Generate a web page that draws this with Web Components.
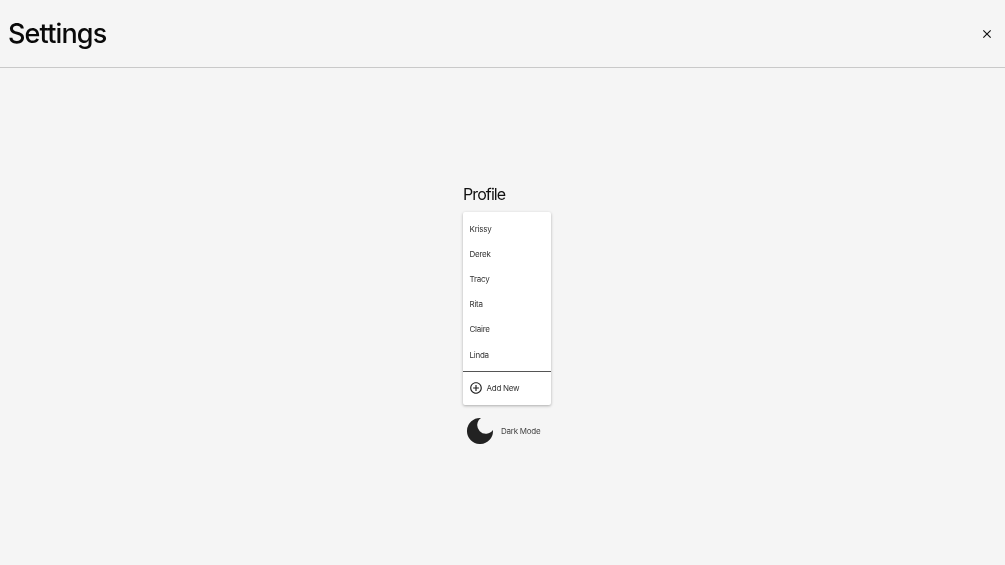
<!DOCTYPE html>
<html><head><meta charset="utf-8"><style>
html,body{margin:0;height:100%;background:#f5f5f5}
body{font-family:Inter,"Liberation Sans",sans-serif;color:#111}
</style></head><body>
<settings-page></settings-page>
<script>
function def(name,html){customElements.define(name,class extends HTMLElement{constructor(){super();this.attachShadow({mode:'open'}).innerHTML=html}})}
def('settings-header',`<style>:host{display:flex;align-items:center;justify-content:space-between;box-sizing:border-box;height:68px;padding:0 11.500px 0 8px;border-bottom:1px solid #c9c9c9}
h1{margin:0;font:500 27px/1 Inter,sans-serif;color:#0a0a0a;letter-spacing:-.85px}svg{display:block}</style>
<h1>Settings</h1><svg width="14" height="14" viewBox="0 0 24 24"><path fill="#111" d="M19 6.41 17.59 5 12 10.59 6.41 5 5 6.41 10.59 12 5 17.59 6.41 19 12 13.41 17.59 19 19 17.59 13.41 12z"/></svg>`);
def('profile-item',`<style>:host{display:flex;align-items:center;height:25.1px;padding-left:6.5px;font:400 8px Inter,sans-serif;letter-spacing:-.25px;color:#333}</style><slot></slot>`);
def('add-new',`<style>:host{display:flex;align-items:center;gap:4px;height:32px;padding-left:5.5px;font:400 8px Inter,sans-serif;letter-spacing:-.25px;color:#333}svg{display:block}</style>
<svg width="14" height="14" viewBox="0 0 24 24"><path fill="#222" d="M13 7h-2v4H7v2h4v4h2v-4h4v-2h-4V7zm-1-5C6.48 2 2 6.48 2 12s4.480 10 10 10 10-4.480 10-10S17.520 2 12 2zm0 18c-4.410 0-8-3.590-8-8s3.590-8 8-8 8 3.590 8 8-3.590 8-8 8z"/></svg><slot></slot>`);
def('profile-card',`<style>:host{display:block;width:88px;height:193px;box-sizing:border-box;background:#fff;border-radius:2px;box-shadow:0 1px 3px rgba(0,0,0,.3)}
.list{height:160px;box-sizing:border-box;padding-top:4.5px;border-bottom:1px solid #555}</style>
<div class="list"><slot></slot></div><add-new>Add New</add-new>`);
def('dark-toggle',`<style>:host{display:flex;align-items:center;gap:8px;height:30px;margin-top:11px;padding-left:4px;font:400 8px Inter,sans-serif;letter-spacing:-.25px;color:#444}svg{display:block}</style>
<svg width="26" height="26" viewBox="0 0 26 26"><path fill="#222" d="M14 .05A13 13 0 1 0 25.950 12 8.600 8.600 0 1 1 14 .05z"/></svg><slot></slot>`);
def('settings-page',`<style>:host{display:block;min-height:100vh;will-change:transform}
main{display:flex;justify-content:center;padding:116px 0 0 9px}
.col{width:88px}
h2{margin:0 0 8px;height:20px;font:400 16px/20px Inter,sans-serif;color:#111;white-space:nowrap;letter-spacing:-.9px}</style>
<settings-header></settings-header>
<main><div class="col"><h2>Profile</h2>
<profile-card><profile-item>Krissy</profile-item><profile-item>Derek</profile-item><profile-item>Tracy</profile-item><profile-item>Rita</profile-item><profile-item>Claire</profile-item><profile-item>Linda</profile-item></profile-card>
<dark-toggle>Dark Mode</dark-toggle></div></main>`);
</script></body></html>
